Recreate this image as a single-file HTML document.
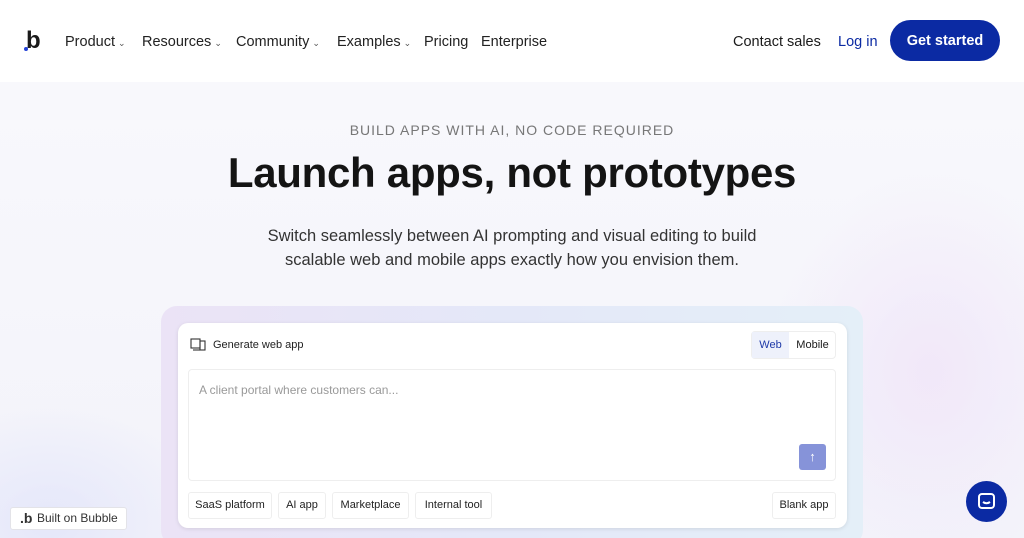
<!DOCTYPE html>
<html><head><meta charset="utf-8"><style>
*{margin:0;padding:0;box-sizing:border-box}
html,body{width:1024px;height:538px;overflow:hidden}
body{font-family:"Liberation Sans",sans-serif;color:#1a1a1a;position:relative;background:#f6f6fb}
.hdr{position:absolute;left:0;top:0;width:1024px;height:82px;background:#fff}
.bg{position:absolute;left:0;top:82px;width:1024px;height:456px;background:
radial-gradient(ellipse 160px 200px at 930px 290px,rgba(240,228,248,.8),transparent),
radial-gradient(ellipse 160px 120px at 50px 440px,rgba(225,228,250,.8),transparent),
linear-gradient(#f8f8fc,#f3f3fa)}
.logo{position:absolute;left:26px;top:28px;font-size:24px;font-weight:bold;line-height:26px}
.logo i{position:absolute;left:-2px;bottom:3px;width:4px;height:4px;background:#2442d6;border-radius:50%}
.nav{position:absolute;top:34px;font-size:14.5px;color:#222}
.nav span{position:absolute;white-space:nowrap}
.car{font-size:9px;color:#555;margin-left:3px}
.cs{position:absolute;left:733px;top:34px;font-size:14.5px}
.li{position:absolute;left:838px;top:34px;font-size:14.5px;color:#0b2aa3}
.gs{position:absolute;left:890px;top:20px;width:110px;height:41px;border-radius:21px;background:#0b2aa3;color:#fff;font-size:14.5px;font-weight:bold;text-align:center;line-height:42px}
.eb{position:absolute;top:122px;width:1024px;text-align:center;font-size:14px;letter-spacing:1px;color:#777}
h1{position:absolute;top:149px;width:1024px;text-align:center;font-size:42px;font-weight:bold;color:#141414;letter-spacing:-.3px}
.sub{position:absolute;top:224px;width:1024px;text-align:center;font-size:16.5px;line-height:24px;color:#333}
.outer{position:absolute;left:161px;top:306px;width:702px;height:240px;border-radius:16px;background:linear-gradient(90deg,#ebe3f6,#e4e8f8,#e4eff8)}
.card{position:absolute;left:178px;top:323px;width:669px;height:205px;background:#fff;border-radius:10px;box-shadow:0 1px 4px rgba(0,0,0,.1)}
.gt{position:absolute;left:213px;top:339px;font-size:11px;color:#222}
.tog{position:absolute;left:751px;top:331px;width:85px;height:28px;border:1px solid #eee;border-radius:4px;font-size:11px}
.tog .w{position:absolute;left:0;top:0;width:37px;height:26px;background:#eef1fb;color:#1f3aa8;text-align:center;line-height:26px}
.tog .m{position:absolute;left:37px;top:0;width:47px;text-align:center;line-height:26px}
.ta{position:absolute;left:188px;top:369px;width:648px;height:112px;border:1px solid #eee;border-radius:4px}
.ph{position:absolute;left:10px;top:13px;font-size:12px;color:#999}
.up{position:absolute;left:610px;top:74px;width:27px;height:26px;background:#8693d9;border-radius:3px;color:#fff;text-align:center;line-height:26px;font-size:13px}
.chip{position:absolute;top:492px;height:27px;border:1px solid #eee;border-radius:3px;font-size:11px;line-height:25px;text-align:center;color:#222}
.bob{position:absolute;left:10px;top:507px;width:117px;height:23px;background:#fff;border:1px solid #e3e3e8;border-radius:3px;font-size:12px;line-height:21px;padding-left:26px;color:#333}
.bob b{position:absolute;left:9px;top:0;font-size:14px}
.chat{position:absolute;left:966px;top:481px;width:41px;height:41px;border-radius:50%;background:#0b2aa3}
</style></head><body>
<div class="hdr"></div><div class="bg"></div>
<div class="logo"><i></i>b</div>
<div class="nav">
<span style="left:65px">Product<span class="car" style="position:static">&#8964;</span></span>
<span style="left:142px">Resources<span class="car" style="position:static">&#8964;</span></span>
<span style="left:236px">Community<span class="car" style="position:static">&#8964;</span></span>
<span style="left:337px">Examples<span class="car" style="position:static">&#8964;</span></span>
<span style="left:424px">Pricing</span>
<span style="left:481px">Enterprise</span>
</div>
<div class="cs">Contact sales</div><div class="li">Log in</div>
<div class="gs">Get started</div>
<div class="eb">BUILD APPS WITH AI, NO CODE REQUIRED</div>
<h1>Launch apps, not prototypes</h1>
<div class="sub">Switch seamlessly between AI prompting and visual editing to build<br>scalable web and mobile apps exactly how you envision them.</div>
<div class="outer"></div>
<div class="card"></div>
<svg style="position:absolute;left:190px;top:338px" width="16" height="14" viewBox="0 0 16 14" fill="none" stroke="#333" stroke-width="1.1"><rect x="1" y="1" width="9" height="9"/><rect x="10" y="3" width="5" height="9"/><path d="M3 12h7"/></svg>
<div class="gt">Generate web app</div>
<div class="tog"><div class="w">Web</div><div class="m">Mobile</div></div>
<div class="ta"><div class="ph">A client portal where customers can...</div><div class="up">&#8593;</div></div>
<div class="chip" style="left:188px;width:84px">SaaS platform</div>
<div class="chip" style="left:278px;width:48px">AI app</div>
<div class="chip" style="left:332px;width:77px">Marketplace</div>
<div class="chip" style="left:415px;width:77px">Internal tool</div>
<div class="chip" style="left:772px;width:64px">Blank app</div>
<div class="bob"><b>.b</b>Built on Bubble</div>
<div class="chat"><svg style="position:absolute;left:11px;top:11px" width="19" height="19" viewBox="0 0 19 19" fill="none" stroke="#fff" stroke-width="2"><rect x="2" y="2" width="15" height="14" rx="3"/><path d="M6 10q3.5 2.5 7 0"/></svg></div>
</body></html>
